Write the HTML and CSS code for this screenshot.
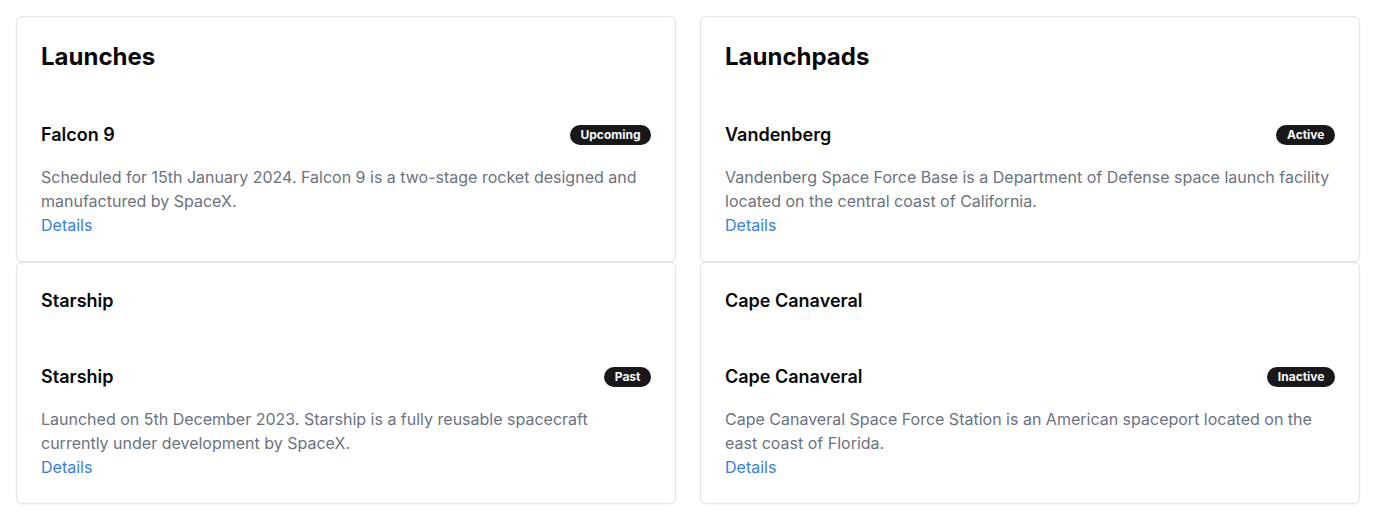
FILE: index.html
```html
<!DOCTYPE html>
<html lang="en">
<head>
<meta charset="utf-8">
<title>SpaceX</title>
<link rel="stylesheet" href="styles.css">
</head>
<body>
<main class="grid">
  <section class="column">
    <div class="card">
      <div class="card-header"><h2 class="title-lg">Launches</h2></div>
      <div class="card-content">
        <div class="item">
          <div class="item-head">
            <h3 class="item-title">Falcon 9</h3>
            <span class="badge">Upcoming</span>
          </div>
          <p class="desc">Scheduled for 15th January 2024. Falcon 9 is a two-stage rocket designed and manufactured by SpaceX.</p>
          <a class="link" href="#">Details</a>
        </div>
      </div>
    </div>
    <div class="card">
      <div class="card-header"><h3 class="title-md">Starship</h3></div>
      <div class="card-content">
        <div class="item">
          <div class="item-head">
            <h3 class="item-title">Starship</h3>
            <span class="badge">Past</span>
          </div>
          <p class="desc">Launched on 5th December 2023. Starship is a fully reusable spacecraft currently under development by SpaceX.</p>
          <a class="link" href="#">Details</a>
        </div>
      </div>
    </div>
  </section>
  <section class="column">
    <div class="card">
      <div class="card-header"><h2 class="title-lg">Launchpads</h2></div>
      <div class="card-content">
        <div class="item">
          <div class="item-head">
            <h3 class="item-title">Vandenberg</h3>
            <span class="badge">Active</span>
          </div>
          <p class="desc">Vandenberg Space Force Base is a Department of Defense space launch facility located on the central coast of California.</p>
          <a class="link" href="#">Details</a>
        </div>
      </div>
    </div>
    <div class="card">
      <div class="card-header"><h3 class="title-md">Cape Canaveral</h3></div>
      <div class="card-content">
        <div class="item">
          <div class="item-head">
            <h3 class="item-title">Cape Canaveral</h3>
            <span class="badge">Inactive</span>
          </div>
          <p class="desc">Cape Canaveral Space Force Station is an American spaceport located on the east coast of Florida.</p>
          <a class="link" href="#">Details</a>
        </div>
      </div>
    </div>
  </section>
</main>
</body>
</html>
```

FILE: styles.css
```css
* { box-sizing: border-box; }
html, body { margin: 0; padding: 0; background: #ffffff; }
body {
  font-family: Inter, "Liberation Sans", sans-serif;
  color: #09090b;
  padding: 16px;
}
.grid {
  display: grid;
  grid-template-columns: 1fr 1fr;
  gap: 24px;
}
.column {
  display: flex;
  flex-direction: column;
  gap: 0;
}
.card {
  border: 1px solid #e4e4e7;
  border-radius: 6px;
  background: #fff;
  box-shadow: 0 1px 2px rgba(0,0,0,0.05);
}
.card-header { padding: 24px; }
.title-lg {
  margin: 0;
  font-size: 24px;
  line-height: 32px;
  font-weight: 700;
}
.title-md {
  margin: 0;
  font-size: 18px;
  line-height: 28px;
  font-weight: 600;
}
.card-content { padding: 0 24px 24px; }
.item { padding-top: 24px; }
.item-head {
  display: flex;
  align-items: center;
  justify-content: space-between;
  margin-bottom: 16px;
}
.item-title {
  margin: 0;
  font-size: 18px;
  line-height: 28px;
  font-weight: 600;
}
.badge {
  background: #18181b;
  color: #fafafa;
  font-size: 12px;
  line-height: 16px;
  font-weight: 700;
  padding: 2px 10.5px;
  border-radius: 9999px;
}
.desc {
  margin: 0;
  font-size: 16px;
  line-height: 24px;
  color: #6b7280;
}
.link {
  display: inline-block;
  font-size: 16px;
  line-height: 24px;
  color: #3b7ddd;
  text-decoration: none;
}
```
